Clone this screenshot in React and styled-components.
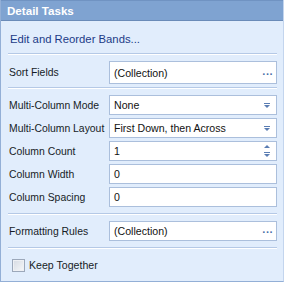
import React from 'react';
import styled, { createGlobalStyle } from 'styled-components';

const GlobalStyle = createGlobalStyle`
  html, body {
    margin: 0;
    padding: 0;
    background: #ffffff;
  }
  body {
    font-family: "Liberation Sans", Arial, sans-serif;
  }
`;

const Panel = styled.div`
  width: 284px;
  height: 282px;
  box-sizing: border-box;
  background: #e1edfc;
  border-left: 1px solid #93afd6;
  border-right: 1px solid #c3d5ee;
  border-bottom: 1px solid #93afd6;
  display: flex;
  flex-direction: column;
`;

const Header = styled.div`
  height: 19px;
  border-top: 1px solid #7093c2;
  border-bottom: 1px solid #6a8bb8;
  background: #7fa3d1;
  color: #ffffff;
  font-weight: bold;
  font-size: 11.6px;
  display: flex;
  align-items: center;
  padding-left: 6px;
`;

const Body = styled.div`
  padding: 0 6px 0 7px;
  display: flex;
  flex-direction: column;
`;

const LinkRow = styled.div`
  height: 28px;
  padding-top: 4px;
  padding-left: 2px;
  display: flex;
  align-items: center;
  font-size: 11.3px;
  color: #1c3b87;
`;

const Separator = styled.div`
  height: 1px;
  background: #b5c9e6;
  border-bottom: 1px solid #ffffff;
`;

const Section = styled.div`
  display: flex;
  flex-direction: column;
  gap: 3px;
  padding: ${(p) => p.pad || '6px 0 6px'};
`;

const Row = styled.div`
  display: flex;
  align-items: center;
  height: ${(p) => p.h || 20}px;
`;

const Label = styled.div`
  width: 100px;
  flex-shrink: 0;
  font-size: 10.4px;
  color: #161c26;
  white-space: nowrap;
  padding-left: 1px;
`;

const Field = styled.div`
  flex: 1;
  height: 100%;
  box-sizing: border-box;
  background: #ffffff;
  border: 1px solid #abbfdc;
  display: flex;
  align-items: center;
  padding: 0 3px 0 4px;
  font-size: 10.6px;
  color: #111111;
`;

const Value = styled.span`
  flex: 1;
`;

const Dots = styled.span`
  color: #4a6fa8;
  font-weight: bold;
  font-size: 11px;
  letter-spacing: 0.5px;
  margin-top: -4px;
`;

const Arrow = () => (
  <svg width="6" height="5" viewBox="0 0 6 5" style={{ marginRight: 3 }}>
    <rect x="0" y="0" width="6" height="1" fill="#5a7db3" />
    <path d="M0 2 H6 L3 5 Z" fill="#5a7db3" />
  </svg>
);

const Spin = () => (
  <svg width="6" height="14" viewBox="0 0 6 14" style={{ marginRight: 3 }}>
    <path d="M0 4 H6 L3 1 Z" fill="#5a7db3" />
    <rect x="0" y="8" width="6" height="1" fill="#5a7db3" />
    <path d="M0 10 H6 L3 13 Z" fill="#5a7db3" />
  </svg>
);

const CheckRow = styled.label`
  display: flex;
  align-items: center;
  gap: 4px;
  height: 32px;
  padding-left: 4px;
  font-size: 10.6px;
  color: #161c26;
`;

const Box = styled.span`
  width: 11px;
  height: 11px;
  border: 1px solid #9ca8ba;
  background: linear-gradient(135deg, #d6dbe3, #f6f7f9);
  box-shadow: inset 0 0 0 1px #eef0f4;
`;

export default function App() {
  return (
    <>
      <GlobalStyle />
      <Panel>
        <Header>Detail Tasks</Header>
        <Body>
          <LinkRow>Edit and Reorder Bands...</LinkRow>
          <Separator />
          <Section pad="6px 0 3px">
            <Row h={23}>
              <Label>Sort Fields</Label>
              <Field>
                <Value>(Collection)</Value>
                <Dots>...</Dots>
              </Field>
            </Row>
          </Section>
          <Separator />
          <Section pad="6px 0 6px">
            <Row>
              <Label>Multi-Column Mode</Label>
              <Field>
                <Value>None</Value>
                <Arrow />
              </Field>
            </Row>
            <Row>
              <Label>Multi-Column Layout</Label>
              <Field>
                <Value>First Down, then Across</Value>
                <Arrow />
              </Field>
            </Row>
            <Row>
              <Label>Column Count</Label>
              <Field>
                <Value>1</Value>
                <Spin />
              </Field>
            </Row>
            <Row>
              <Label>Column Width</Label>
              <Field>
                <Value>0</Value>
              </Field>
            </Row>
            <Row>
              <Label>Column Spacing</Label>
              <Field>
                <Value>0</Value>
              </Field>
            </Row>
          </Section>
          <Separator />
          <Section pad="6px 0 6px">
            <Row>
              <Label>Formatting Rules</Label>
              <Field>
                <Value>(Collection)</Value>
                <Dots>...</Dots>
              </Field>
            </Row>
          </Section>
          <Separator />
          <CheckRow>
            <Box />
            Keep Together
          </CheckRow>
        </Body>
      </Panel>
    </>
  );
}
